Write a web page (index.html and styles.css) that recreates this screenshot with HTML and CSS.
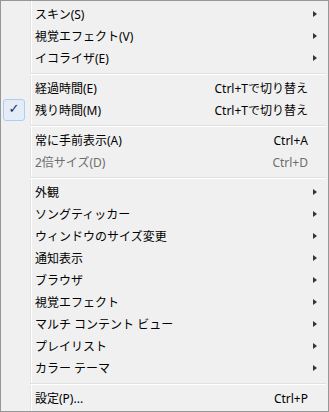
FILE: index.html
```html
<!DOCTYPE html>
<html>

<head>
    <title>メニュー</title>
    <meta charset="utf-8">
    <meta name="viewport" content="width=device-width, initial-scale=1.0">
    <link rel="stylesheet" href="styles.css">
</head>

<body>

    <div class="menu">
        <div class="item"><span class="check"></span><span class="label">スキン(S)</span><span class="key"></span><span class="arrow sub"></span></div>
        <div class="item"><span class="check"></span><span class="label">視覚エフェクト(V)</span><span class="key"></span><span class="arrow sub"></span></div>
        <div class="item"><span class="check"></span><span class="label">イコライザ(E)</span><span class="key"></span><span class="arrow sub"></span></div>
        <div class="sep"></div>
        <div class="item"><span class="check"></span><span class="label">経過時間(E)</span><span class="key">Ctrl+Tで切り替え</span><span class="arrow"></span></div>
        <div class="item"><span class="check on">✓</span><span class="label">残り時間(M)</span><span class="key">Ctrl+Tで切り替え</span><span class="arrow"></span></div>
        <div class="sep"></div>
        <div class="item"><span class="check"></span><span class="label">常に手前表示(A)</span><span class="key">Ctrl+A</span><span class="arrow"></span></div>
        <div class="item off"><span class="check"></span><span class="label">2倍サイズ(D)</span><span class="key">Ctrl+D</span><span class="arrow"></span></div>
        <div class="sep"></div>
        <div class="item"><span class="check"></span><span class="label">外観</span><span class="key"></span><span class="arrow sub"></span></div>
        <div class="item"><span class="check"></span><span class="label">ソングティッカー</span><span class="key"></span><span class="arrow sub"></span></div>
        <div class="item"><span class="check"></span><span class="label">ウィンドウのサイズ変更</span><span class="key"></span><span class="arrow sub"></span></div>
        <div class="item"><span class="check"></span><span class="label">通知表示</span><span class="key"></span><span class="arrow sub"></span></div>
        <div class="item"><span class="check"></span><span class="label">ブラウザ</span><span class="key"></span><span class="arrow sub"></span></div>
        <div class="item"><span class="check"></span><span class="label">視覚エフェクト</span><span class="key"></span><span class="arrow sub"></span></div>
        <div class="item"><span class="check"></span><span class="label">マルチ コンテント ビュー</span><span class="key"></span><span class="arrow sub"></span></div>
        <div class="item"><span class="check"></span><span class="label">プレイリスト</span><span class="key"></span><span class="arrow sub"></span></div>
        <div class="item"><span class="check"></span><span class="label">カラー テーマ</span><span class="key"></span><span class="arrow sub"></span></div>
        <div class="sep"></div>
        <div class="item"><span class="check"></span><span class="label">設定(P)...</span><span class="key">Ctrl+P</span><span class="arrow"></span></div>
    </div>

</body>

</html>
```

FILE: styles.css
```css
body {
    margin: 0;
    font-family: "Noto Sans", "Noto Sans CJK JP", sans-serif;
    font-size: 12px;
    color: #000;
}

.menu {
    width: 329px;
    height: 412px;
    box-sizing: border-box;
    border: 1px solid #979797;
    padding: 2px;
    background-color: #f0f0f0;
    background-image: linear-gradient(to right, transparent 29px, #e2e3e3 29px, #e2e3e3 30px, #fff 30px, #fff 31px, transparent 31px);
}

.item {
    display: flex;
    align-items: center;
    height: 22px;
    white-space: nowrap;
}

.check {
    width: 22px;
    height: 22px;
    box-sizing: border-box;
    flex: none;
}

.check.on {
    border: 1px solid #aecdf2;
    border-radius: 3px;
    background: #e3ecf7;
    color: #0f2d74;
    font-family: "DejaVu Sans", sans-serif;
    font-size: 13px;
    font-weight: bold;
    line-height: 18px;
    text-align: center;
}

.label {
    flex: 1;
    margin-left: 10px;
}

.key {
    text-align: right;
}

.arrow {
    width: 4px;
    height: 7px;
    margin-left: 5px;
    margin-right: 9px;
    flex: none;
}

.arrow.sub {
    border-left: 4px solid #333;
    border-top: 3.5px solid transparent;
    border-bottom: 3.5px solid transparent;
    width: 0;
    height: 0;
}

.off {
    color: #6d6d6d;
}

.sep {
    height: 8px;
    margin-left: 27px;
    padding-top: 4px;
    box-sizing: border-box;
}

.sep::before {
    content: "";
    display: block;
    border-top: 1px solid #e0e0e0;
    border-bottom: 1px solid #fff;
}
```
